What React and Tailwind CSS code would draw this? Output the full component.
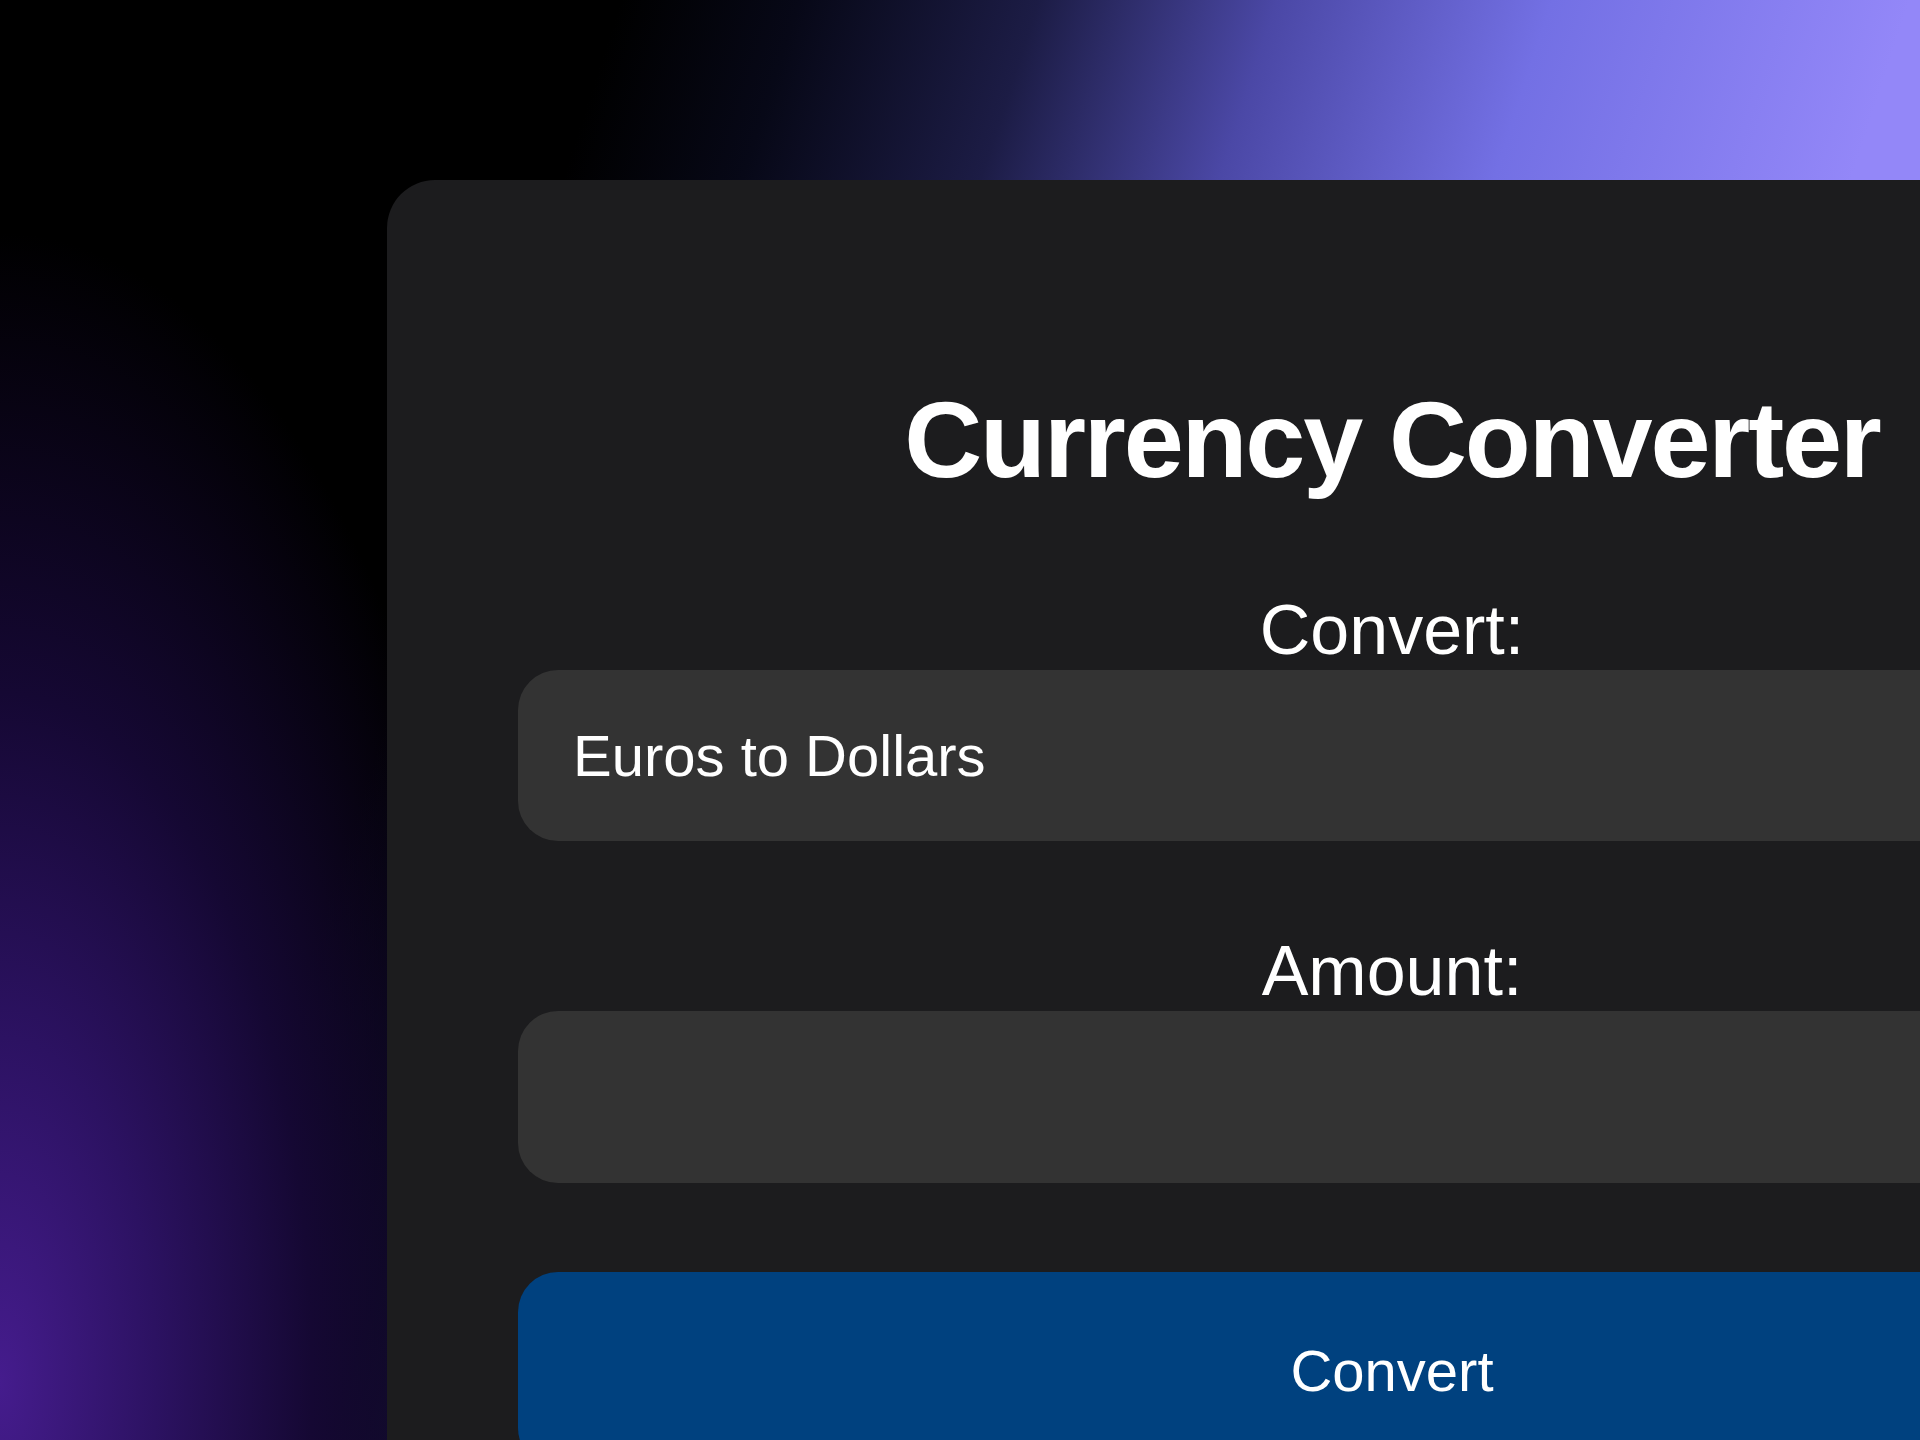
import React, { useState } from "react";

export default function App() {
  const [direction, setDirection] = useState("eur-usd");
  const [amount, setAmount] = useState("");

  return (
    <div className="h-[1440px] w-full overflow-hidden bg-black bg-[image:radial-gradient(ellipse_520px_1150px_at_0%_96%,#451c8d_0%,#2c1262_30%,#150833_60%,transparent_100%),linear-gradient(108deg,#000_26%,#070817_33.5%,#1c1c45_43.5%,#4b48a6_53.5%,#7370e4_65%,#9387f8_80%)] font-['Liberation_Sans',Arial,sans-serif] text-white">
      <div className="ml-[387px] mt-[180px] flex w-[2010px] flex-col items-center rounded-[48px] bg-[#1c1c1e] px-[131px] pt-[198px] pb-[80px]">
        <h1 className="text-[108px] font-bold leading-[124px] tracking-[-0.02em]">
          Currency Converter
        </h1>

        <label htmlFor="direction" className="mt-[88px] text-[70px] leading-[80px]">
          Convert:
        </label>
        <select
          id="direction"
          value={direction}
          onChange={(e) => setDirection(e.target.value)}
          className="h-[171px] w-full appearance-none rounded-[40px] border-0 bg-[#333333] pl-[55px] text-[58px] text-white outline-none"
        >
          <option value="eur-usd">Euros to Dollars</option>
          <option value="usd-eur">Dollars to Euros</option>
        </select>

        <label htmlFor="amount" className="mt-[90px] text-[70px] leading-[80px]">
          Amount:
        </label>
        <input
          id="amount"
          type="number"
          value={amount}
          onChange={(e) => setAmount(e.target.value)}
          className="h-[172px] w-full rounded-[40px] border-0 bg-[#333333] px-[55px] text-[58px] text-white outline-none"
        />

        <button className="mt-[89px] h-[196px] w-full rounded-[40px] bg-[#00417f] text-[58px] text-white">
          Convert
        </button>
      </div>
    </div>
  );
}
